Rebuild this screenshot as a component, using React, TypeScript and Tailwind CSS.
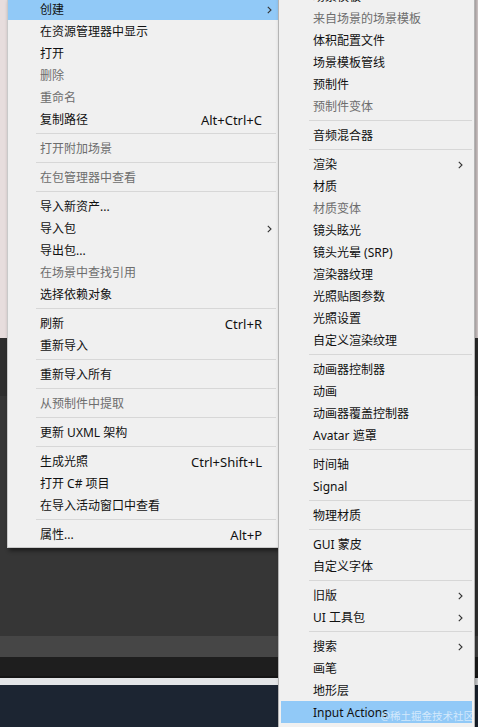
import React from "react";

type Row =
  | { label: string; shortcut?: string; disabled?: boolean; sub?: boolean; active?: boolean }
  | "sep";

const leftItems: Row[] = [
  { label: "创建", sub: true, active: true },
  { label: "在资源管理器中显示" },
  { label: "打开" },
  { label: "删除", disabled: true },
  { label: "重命名", disabled: true },
  { label: "复制路径", shortcut: "Alt+Ctrl+C" },
  "sep",
  { label: "打开附加场景", disabled: true },
  "sep",
  { label: "在包管理器中查看", disabled: true },
  "sep",
  { label: "导入新资产..." },
  { label: "导入包", sub: true },
  { label: "导出包..." },
  { label: "在场景中查找引用", disabled: true },
  { label: "选择依赖对象" },
  "sep",
  { label: "刷新", shortcut: "Ctrl+R" },
  { label: "重新导入" },
  "sep",
  { label: "重新导入所有" },
  "sep",
  { label: "从预制件中提取", disabled: true },
  "sep",
  { label: "更新 UXML 架构" },
  "sep",
  { label: "生成光照", shortcut: "Ctrl+Shift+L" },
  { label: "打开 C# 项目" },
  { label: "在导入活动窗口中查看" },
  "sep",
  { label: "属性...", shortcut: "Alt+P" },
];

const rightItems: Row[] = [
  { label: "场景模板" },
  { label: "来自场景的场景模板", disabled: true },
  { label: "体积配置文件" },
  { label: "场景模板管线" },
  { label: "预制件" },
  { label: "预制件变体", disabled: true },
  "sep",
  { label: "音频混合器" },
  "sep",
  { label: "渲染", sub: true },
  { label: "材质" },
  { label: "材质变体", disabled: true },
  { label: "镜头眩光" },
  { label: "镜头光晕 (SRP)" },
  { label: "渲染器纹理" },
  { label: "光照贴图参数" },
  { label: "光照设置" },
  { label: "自定义渲染纹理" },
  "sep",
  { label: "动画器控制器" },
  { label: "动画" },
  { label: "动画器覆盖控制器" },
  { label: "Avatar 遮罩" },
  "sep",
  { label: "时间轴" },
  { label: "Signal" },
  "sep",
  { label: "物理材质" },
  "sep",
  { label: "GUI 蒙皮" },
  { label: "自定义字体" },
  "sep",
  { label: "旧版", sub: true },
  { label: "UI 工具包", sub: true },
  "sep",
  { label: "搜索", sub: true },
  { label: "画笔" },
  { label: "地形层" },
  { label: "Input Actions", active: true },
];

function Chevron() {
  return (
    <svg width="5" height="8" viewBox="0 0 5 8" fill="none" stroke="#333" strokeWidth="1.1">
      <polyline points="0.8 0.8 4 4 0.8 7.2" />
    </svg>
  );
}

function MenuList({ rows, side }: { rows: Row[]; side: "left" | "right" }) {
  const isLeft = side === "left";
  return (
    <>
      {rows.map((r, i) => {
        if (r === "sep") {
          return (
            <div key={i} className={`h-[7px] flex items-center ${isLeft ? "ml-[28px] mr-[2px]" : "ml-[30px] mr-[2px]"}`}>
              <div className="h-px w-full bg-[#d7d7d7]" />
            </div>
          );
        }
        return (
          <div
            key={i}
            className={`h-[22px] pt-[2px] flex items-center ${
              isLeft ? "pl-[32px] pr-[6px]" : "pl-[32px] pr-[9px] mx-[2px]"
            } ${r.active ? "bg-[#91c9f7]" : ""} ${r.disabled ? "text-[#6d6d6d]" : "text-[#111]"}`}
          >
            <span className="flex-1 whitespace-nowrap">{r.label}</span>
            {r.shortcut && <span className="text-[13px] whitespace-nowrap">{r.shortcut}</span>}
            <span className="w-[10px] flex justify-end">{r.sub && <Chevron />}</span>
          </div>
        );
      })}
    </>
  );
}

export default function App() {
  return (
    <div
      className="relative w-[478px] h-[727px] overflow-hidden text-[12px] leading-[20px]"
      style={{ fontFamily: '"Noto Sans", "Noto Sans CJK SC", sans-serif' }}
    >
      {/* editor behind the menus */}
      <div className="flex flex-col h-full">
        <div className="h-[338px] bg-[#e7dddd]" />
        <div className="h-[58px] bg-[#2f2f2f]" />
        <div className="h-[240px] bg-[#363636]" />
        <div className="h-[21px] bg-[#464646]" />
        <div className="h-[21px] bg-[#1e1e1e] border-b-2 border-[#151515]" />
        <div className="h-[7px] bg-[#e3e5e7]" />
        <div className="flex-1 bg-[#1c2532]" />
      </div>

      {/* context menu */}
      <div className="absolute left-[7px] top-[-2px] w-[271px] bg-[#f0f0f0] border-l border-b border-[#c9c9c9] pb-[2px] shadow-[2px_3px_4px_rgba(0,0,0,0.45)]">
        <MenuList rows={leftItems} side="left" />
      </div>

      {/* submenu */}
      <div className="absolute left-[278px] top-[-15px] w-[197px] bg-[#f0f0f0] border-l border-r border-[#b4b4b4] pb-[6px] shadow-[2px_0_4px_rgba(0,0,0,0.35)]">
        <MenuList rows={rightItems} side="right" />
      </div>

      <div className="absolute right-[4px] bottom-[4px] text-[10.5px] leading-[14px] text-white/60 whitespace-nowrap">
        @稀土掘金技术社区
      </div>
    </div>
  );
}
